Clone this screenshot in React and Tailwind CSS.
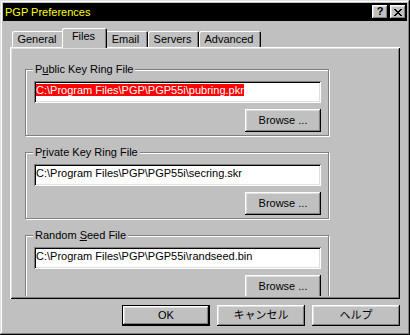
import React from "react";

const raised =
  "bg-[#c0c0c0] shadow-[inset_-1px_-1px_#000,inset_1px_1px_#fff,inset_-2px_-2px_#808080,inset_2px_2px_#dfdfdf]";
const sunken =
  "bg-white shadow-[inset_1px_1px_#808080,inset_-1px_-1px_#fff,inset_2px_2px_#000,inset_-2px_-2px_#dfdfdf]";
const tabEdge =
  "rounded-t-[2px] shadow-[inset_1px_1px_#fff,inset_-1px_0_#000,inset_-2px_0_#808080]";

const tabs = [
  { label: "General", w: "w-[52px]" },
  { label: "Files", w: "w-[45px]", active: true },
  { label: "Email", w: "w-[43px]" },
  { label: "Servers", w: "w-[51px]" },
  { label: "Advanced", w: "w-[62px]" },
];

function Group({ label, value, selected, className = "" }) {
  return (
    <div
      className={`relative w-[304px] h-[67px] shrink-0 border border-[#808080] shadow-[inset_1px_1px_#fff,1px_1px_#fff] pt-[11px] pl-[8px] pr-[7px] flex flex-col items-end ${className}`}
    >
      <span className="absolute -top-[7px] left-[7px] bg-[#c0c0c0] px-[2px] leading-[13px]">
        {label}
      </span>
      <div
        className={`w-full h-[22px] shrink-0 ${sunken} pl-[2px] pt-[2px] leading-[14px] whitespace-nowrap overflow-hidden`}
      >
        <span className={selected ? "bg-[#ff0000] text-white" : ""}>{value}</span>
      </div>
      <button className={`mt-[6px] w-[76px] h-[23px] shrink-0 ${raised} leading-none`}>
        Browse ...
      </button>
    </div>
  );
}

export default function App() {
  return (
    <div className="w-[410px] h-[335px] overflow-hidden bg-[#c0c0c0] p-[3px] flex flex-col text-[11px] text-black font-['Liberation_Sans','Noto_Sans_CJK_JP',sans-serif] shadow-[inset_-1px_-1px_#000,inset_1px_1px_#dfdfdf,inset_-2px_-2px_#808080,inset_2px_2px_#fff]">
      {/* title bar */}
      <div className="h-[18px] shrink-0 bg-black flex items-center justify-between pl-[2px] pr-[1px]">
        <span className="text-[#ffff00] leading-none">PGP Preferences</span>
        <div className="flex gap-[2px]">
          <div className={`w-[16px] h-[14px] ${raised} flex items-center justify-center font-bold text-[11px] leading-none pb-[1px]`}>
            ?
          </div>
          <div className={`w-[16px] h-[14px] ${raised} flex items-center justify-center`}>
            <svg width="8" height="7" viewBox="0 0 8 7" shapeRendering="crispEdges">
              <path
                d="M0 0h2v1H0zM6 0h2v1H6zM1 1h2v1H1zM5 1h2v1H5zM2 2h4v1H2zM3 3h2v1H3zM2 4h4v1H2zM1 5h2v1H1zM5 5h2v1H5zM0 6h2v1H0zM6 6h2v1H6z"
                fill="#000"
              />
            </svg>
          </div>
        </div>
      </div>

      {/* body */}
      <div className="px-[7px] pt-[7px] flex flex-col">
        <div className="h-[19px] flex items-end pl-[2px]">
          {tabs.map((t) =>
            t.active ? (
              <div
                key={t.label}
                className={`${t.w} h-[20px] -mx-[2px] -mb-px relative z-10 bg-[#c0c0c0] ${tabEdge} flex items-center justify-center pr-[2px] pb-[3px] leading-[13px]`}
              >
                {t.label}
              </div>
            ) : (
              <div
                key={t.label}
                className={`${t.w} h-[16px] ${tabEdge} flex items-center justify-center pr-[2px] leading-[13px]`}
              >
                {t.label}
              </div>
            )
          )}
        </div>

        <div className="w-[390px] h-[252px] shrink-0 p-[2px] shadow-[inset_1px_1px_#fff,inset_-1px_-1px_#000,inset_2px_2px_#dfdfdf,inset_-2px_-2px_#808080]">
          <div className="h-[247px] overflow-hidden pt-[20px] pl-[13px] flex flex-col">
            <Group
              label={
                <>
                  P<u>u</u>blic Key Ring File
                </>
              }
              value="C:\Program Files\PGP\PGP55i\pubring.pkr"
              selected
            />
            <Group
              className="mt-[16px]"
              label={
                <>
                  P<u>r</u>ivate Key Ring File
                </>
              }
              value="C:\Program Files\PGP\PGP55i\secring.skr"
            />
            <Group
              className="mt-[16px]"
              label={
                <>
                  Random <u>S</u>eed File
                </>
              }
              value="C:\Program Files\PGP\PGP55i\randseed.bin"
            />
          </div>
        </div>

        <div className="mt-[6px] flex justify-end gap-[7px]">
          <button className={`w-[88px] h-[21px] border border-black ${raised} leading-none`}>
            OK
          </button>
          <button className={`w-[88px] h-[21px] ${raised} leading-none`}>キャンセル</button>
          <button className={`w-[88px] h-[21px] ${raised} leading-none`}>ヘルプ</button>
        </div>
      </div>
    </div>
  );
}
